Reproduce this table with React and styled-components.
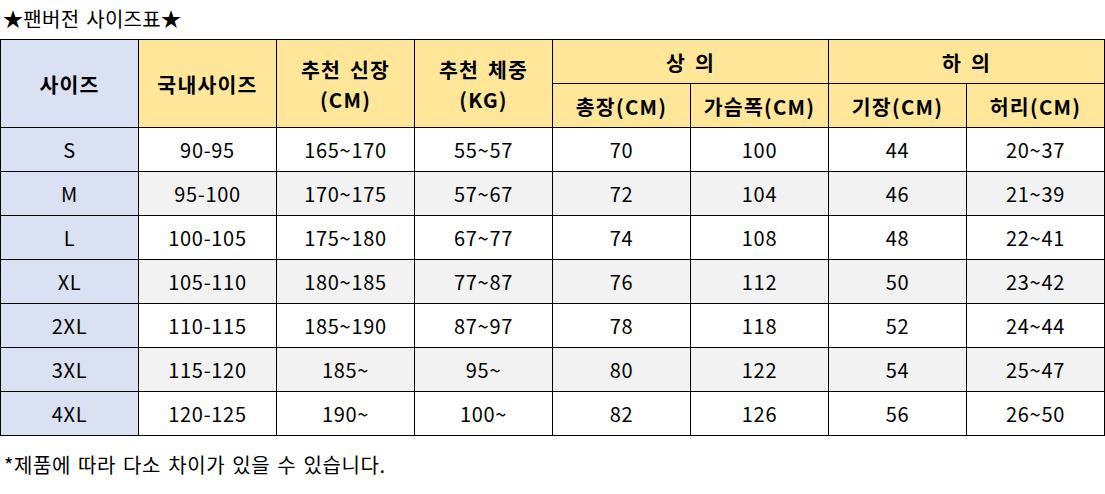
import React from 'react'
import styled, { createGlobalStyle } from 'styled-components'

const Global = createGlobalStyle`
  body {
    margin: 0;
    background: #fff;
    font-family: "Noto Sans CJK KR", "Noto Sans", sans-serif;
    color: #000;
  }
`;

const Page = styled.div`
  width: 1105px;
`;

const Title = styled.div`
  height: 39px;
  line-height: 37px;
  padding-left: 3px;
  font-size: 20px;
  letter-spacing: 0.3px;
  word-spacing: 2px;
`;

const Table = styled.table`
  width: 1105px;
  border-collapse: collapse;
  table-layout: fixed;
`;

const Head = styled.th`
  background: ${p => (p.$blue ? '#d9e1f2' : '#ffe699')};
  border: 1px solid #000;
  height: 43px;
  padding: 0;
  font-size: 20.5px;
  font-weight: 700;
  line-height: 30px;
  letter-spacing: 1.2px;
  word-spacing: 3px;
`;

const Cell = styled.td`
  border: 1px solid #000;
  height: 43px;
  padding: 0;
  text-align: center;
  font-size: 20px;
  letter-spacing: 0.7px;
  background: ${p => (p.$size ? '#d9e1f2' : p.$alt ? '#f2f2f2' : '#fff')};
`;

const Note = styled.div`
  height: 59px;
  line-height: 58px;
  padding-left: 4px;
  font-size: 20px;
  letter-spacing: 0.6px;
  word-spacing: 2px;
`;

const rows = [
  ['S', '90-95', '165~170', '55~57', '70', '100', '44', '20~37'],
  ['M', '95-100', '170~175', '57~67', '72', '104', '46', '21~39'],
  ['L', '100-105', '175~180', '67~77', '74', '108', '48', '22~41'],
  ['XL', '105-110', '180~185', '77~87', '76', '112', '50', '23~42'],
  ['2XL', '110-115', '185~190', '87~97', '78', '118', '52', '24~44'],
  ['3XL', '115-120', '185~', '95~', '80', '122', '54', '25~47'],
  ['4XL', '120-125', '190~', '100~', '82', '126', '56', '26~50'],
]

const App = () => {
  return (
    <Page>
      <Global />
      <Title>★팬버전 사이즈표★</Title>
      <Table>
        <colgroup>
          {Array.from({ length: 8 }).map((_, i) => <col key={i} />)}
        </colgroup>
        <thead>
          <tr>
            <Head rowSpan={2} $blue>사이즈</Head>
            <Head rowSpan={2}>국내사이즈</Head>
            <Head rowSpan={2}>추천 신장<br />(CM)</Head>
            <Head rowSpan={2}>추천 체중<br />(KG)</Head>
            <Head colSpan={2}>상 의</Head>
            <Head colSpan={2}>하 의</Head>
          </tr>
          <tr>
            <Head>총장(CM)</Head>
            <Head>가슴폭(CM)</Head>
            <Head>기장(CM)</Head>
            <Head>허리(CM)</Head>
          </tr>
        </thead>
        <tbody>
          {rows.map((r, i) => (
            <tr key={r[0]}>
              {r.map((v, j) => (
                <Cell key={j} $size={j === 0} $alt={i % 2 === 1}>{v}</Cell>
              ))}
            </tr>
          ))}
        </tbody>
      </Table>
      <Note>*제품에 따라 다소 차이가 있을 수 있습니다.</Note>
    </Page>
  )
}

export default App
